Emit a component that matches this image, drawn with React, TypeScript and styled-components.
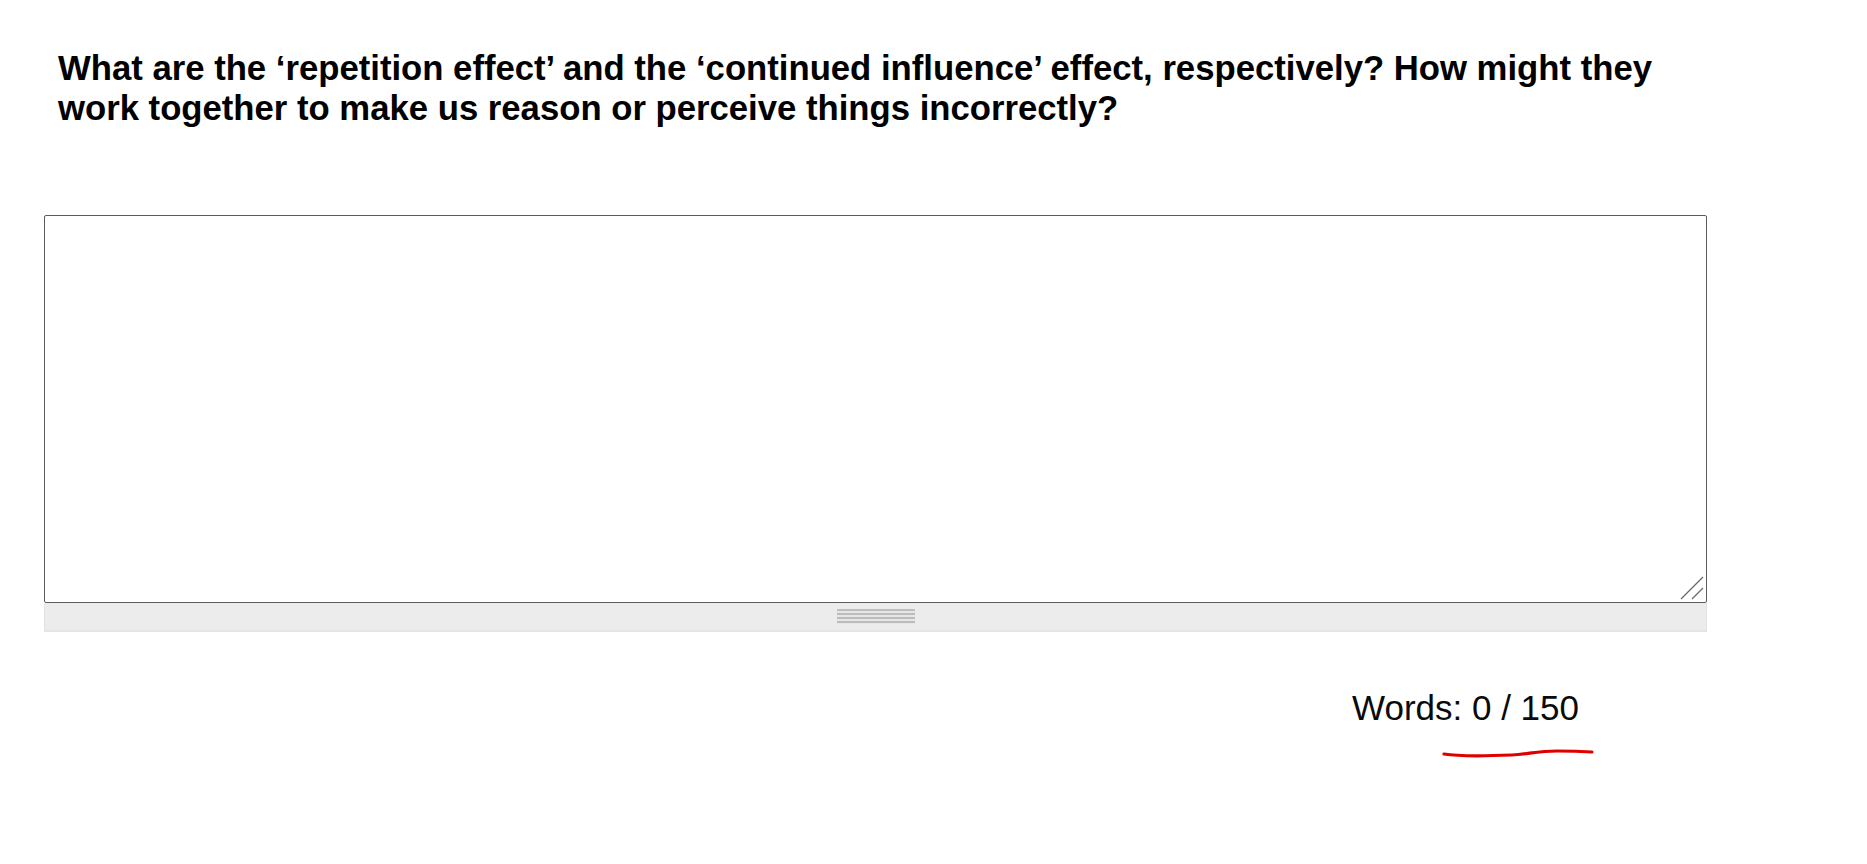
import styled, { createGlobalStyle } from 'styled-components'

const GlobalStyle = createGlobalStyle`
  html, body {
    margin: 0;
    padding: 0;
    background: #ffffff;
  }
  body {
    font-family: 'Liberation Sans', Arial, sans-serif;
    color: #000000;
  }
`

const Page = styled.main`
  display: flex;
  flex-direction: column;
  padding: 48px 0 0 44px;
  width: 1663px;
`

const Question = styled.h2`
  margin: 0 0 87px 14px;
  font-size: 34.7px;
  line-height: 40px;
  font-weight: 700;
  max-width: 1640px;
`

const EditorWrap = styled.div`
  display: flex;
  flex-direction: column;
  width: 1663px;
`

const BoxFrame = styled.div`
  position: relative;
`

const AnswerBox = styled.textarea`
  display: block;
  box-sizing: border-box;
  width: 100%;
  height: 388px;
  margin: 0;
  padding: 6px 8px;
  border: 1px solid #5c5c5c;
  border-radius: 2px;
  background: #ffffff;
  font-family: 'Liberation Sans', Arial, sans-serif;
  font-size: 18px;
  resize: none;
  outline: none;
`

const ResizeHandle = styled.svg`
  position: absolute;
  right: 3px;
  bottom: 3px;
  pointer-events: none;
`

const DragBar = styled.div`
  display: flex;
  justify-content: center;
  align-items: center;
  box-sizing: border-box;
  height: 29px;
  background: #ececec;
  border: 1px solid #e2e2e2;
  border-top: none;
  border-bottom: 2px solid #e4e4e4;
`

const Grip = styled.div`
  width: 78px;
  height: 15px;
  background: repeating-linear-gradient(
    to bottom,
    #bdbdbd 0px,
    #bdbdbd 2px,
    #e6e6e6 2px,
    #e6e6e6 4px
  );
`

const CountRow = styled.div`
  display: flex;
  flex-direction: column;
  align-items: flex-end;
  padding-right: 128px;
  margin-top: 56px;
`

const Count = styled.p`
  margin: 0;
  font-size: 35px;
  line-height: 40px;
  font-weight: 400;
  color: #0a0a0a;
`

const Squiggle = styled.svg`
  display: block;
  margin-top: 18px;
  margin-right: -15px;
`

export default function App() {
  return (
    <>
      <GlobalStyle />
      <Page>
        <Question>
          What are the ‘repetition effect’ and the ‘continued influence’ effect, respectively? How might they work
          together to make us reason or perceive things incorrectly?
        </Question>
        <EditorWrap>
          <BoxFrame>
            <AnswerBox aria-label="Answer" />
            <ResizeHandle width="24" height="24" viewBox="0 0 24 24">
              <line x1="1" y1="23" x2="23" y2="1" stroke="#6a6a6a" strokeWidth="1.3" />
              <line x1="12" y1="23" x2="23" y2="12" stroke="#6a6a6a" strokeWidth="1.3" />
            </ResizeHandle>
          </BoxFrame>
          <DragBar>
            <Grip />
          </DragBar>
        </EditorWrap>
        <CountRow>
          <Count>Words: 0 / 150</Count>
          <Squiggle width="152" height="14" viewBox="0 0 152 14">
            <path
              d="M2 8 C 20 11, 45 10, 70 9 C 85 8.5, 95 5, 115 5 C 130 5, 142 5.5, 150 6"
              fill="none"
              stroke="#e00000"
              strokeWidth="3.2"
              strokeLinecap="round"
            />
          </Squiggle>
        </CountRow>
      </Page>
    </>
  )
}
